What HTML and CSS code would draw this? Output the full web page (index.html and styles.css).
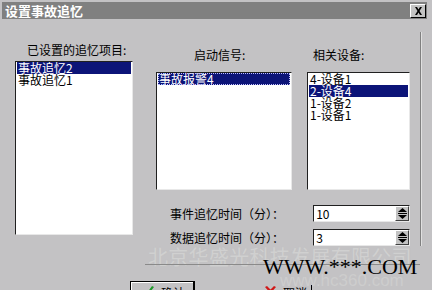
FILE: index.html
```html
<!DOCTYPE html>
<html>
<head>
<meta charset="utf-8">
<link rel="stylesheet" href="styles.css">
</head>
<body>
<div class="window">
  <div class="titlebar">
    <span class="title">设置事故追忆</span>
    <span class="close">
      <svg width="9" height="8" viewBox="0 0 9 8"><path d="M1 0h2l1.5 2.5L6 0h2L5.5 4 8 8H6L4.5 5.5 3 8H1l2.5-4z" fill="#000"/></svg>
    </span>
  </div>
  <div class="content">
    <div class="col-left">
      <div class="label">已设置的追忆项目:</div>
      <div class="listbox list-left">
        <div class="item sel">事故追忆2</div>
        <div class="item">事故追忆1</div>
      </div>
    </div>
    <div class="right-area">
      <div class="top-row">
        <div class="col-mid">
          <div class="label">启动信号:</div>
          <div class="listbox list-mid">
            <div class="item sel dotted">事故报警4</div>
          </div>
        </div>
        <div class="col-right">
          <div class="label label-r">相关设备:</div>
          <div class="listbox list-right">
            <div class="item">4-设备1</div>
            <div class="item sel">2-设备4</div>
            <div class="item">1-设备2</div>
            <div class="item">1-设备1</div>
          </div>
        </div>
      </div>
      <div class="spin-row">
        <span class="spin-label">事件追忆时间（分）：</span>
        <div class="spin">
          <span class="spin-val">10</span>
          <span class="spin-btn"><svg width="9" height="11" viewBox="0 0 9 11"><path d="M4.5 0L9 4H0z M0 7h9L4.5 11z" fill="#000"/><rect x="0" y="5" width="9" height="1" fill="#000"/></svg></span>
        </div>
      </div>
      <div class="spin-row">
        <span class="spin-label">数据追忆时间（分）：</span>
        <div class="spin">
          <span class="spin-val">3</span>
          <span class="spin-btn"><svg width="9" height="11" viewBox="0 0 9 11"><path d="M4.5 0L9 4H0z M0 7h9L4.5 11z" fill="#000"/><rect x="0" y="5" width="9" height="1" fill="#000"/></svg></span>
        </div>
      </div>
    </div>
    <div class="vline"></div>
  </div>
  <div class="footer">
    <div class="btn ok">
      <svg width="11" height="10" viewBox="0 0 11 10"><path d="M0 6l2-2 2 3 5-7 2 1-7 9z" fill="#1f9a2a"/></svg>
      <span>确认</span>
    </div>
    <div class="btn cancel">
      <svg width="11" height="10" viewBox="0 0 11 10"><path d="M0 1l2-1 3.5 3.5L9 0l2 1-3.5 4L11 9l-2 1-3.5-3.5L2 10 0 9l3.5-4z" fill="#d01818"/></svg>
      <span>取消</span>
    </div>
  </div>
  <div class="watermark">
    <div class="wm-cn">北京华盛光科技发展有限公司</div>
    <div class="wm-line"></div>
    <div class="wm-www">WWW.***.COM</div>
    <div class="wm-hc">www.hc360.com</div>
  </div>
</div>
</body>
</html>
```

FILE: styles.css
```css
html, body {
  margin: 0;
  padding: 0;
  background: #c3c3c3;
}
.window {
  position: relative;
  width: 432px;
  height: 290px;
  overflow: hidden;
  background: #c3c2c4;
  font-family: "Noto Sans CJK SC", "DejaVu Sans", sans-serif;
  font-size: 12px;
  color: #000;
}
.titlebar {
  margin: 2px 5px 0 2px;
  height: 17px;
  background: #808080;
  display: flex;
  align-items: center;
  justify-content: space-between;
  padding: 0 1px 0 3px;
}
.title {
  color: #fff;
  font-weight: bold;
  font-size: 13px;
  line-height: 17px;
}
.close {
  width: 14px;
  height: 12px;
  background: #c3c3c3;
  border-top: 1px solid #fff;
  border-left: 1px solid #fff;
  border-right: 1px solid #000;
  border-bottom: 1px solid #000;
  display: flex;
  align-items: center;
  justify-content: center;
}
.content {
  display: flex;
  padding-left: 15px;
}
.label {
  height: 14px;
  line-height: 14px;
  white-space: nowrap;
}
.col-left {
  width: 118px;
  padding-top: 24px;
}
.col-left .label {
  margin-bottom: 4px;
  padding-left: 12px;
}
.listbox {
  background: #fff;
  border-top: 1px solid #202020;
  border-left: 1px solid #202020;
  border-right: 1px solid #e8e8e8;
  border-bottom: 1px solid #e8e8e8;
  box-sizing: border-box;
  padding: 0 1px;
}
.list-left {
  height: 174px;
}
.right-area {
  margin-left: 23px;
  padding-top: 29px;
  width: 254px;
}
.top-row {
  display: flex;
  gap: 15px;
}
.col-mid {
  width: 136px;
}
.col-mid .label {
  padding-left: 38px;
  margin-bottom: 10px;
}
.col-right {
  width: 103px;
}
.label-r {
  padding-left: 6px;
  margin-bottom: 10px;
}
.list-mid, .list-right {
  height: 118px;
}
.item {
  height: 12px;
  line-height: 12px;
  white-space: nowrap;
  padding-left: 1px;
}
.sel {
  background: #0c1478;
  color: #fff;
}
.dotted {
  outline: 1px dotted #c0c0ff;
  outline-offset: -1px;
}
.spin-row {
  display: flex;
  align-items: center;
  height: 17px;
  margin-top: 7px;
}
.top-row + .spin-row {
  margin-top: 15px;
}
.spin-label {
  width: 151px;
  padding-left: 14px;
  white-space: nowrap;
}
.spin {
  width: 102px;
  height: 17px;
  box-sizing: border-box;
  background: #fff;
  border-top: 1px solid #202020;
  border-left: 1px solid #202020;
  border-right: 1px solid #e8e8e8;
  border-bottom: 1px solid #e8e8e8;
  display: flex;
  align-items: center;
  justify-content: space-between;
}
.spin-val {
  padding-left: 2px;
  line-height: 14px;
}
.spin-btn {
  width: 14px;
  height: 15px;
  box-sizing: border-box;
  background: #c3c3c3;
  border-top: 1px solid #fff;
  border-left: 1px solid #fff;
  border-right: 1px solid #404040;
  border-bottom: 1px solid #404040;
  display: flex;
  align-items: center;
  justify-content: center;
}
.vline {
  width: 1px;
  margin-left: 10px;
  margin-top: 13px;
  background: #808080;
  border-right: 1px solid #e0e0e0;
}
.footer {
  display: flex;
  margin-top: 35px;
  padding-left: 130px;
  gap: 60px;
}
.btn {
  height: 24px;
  box-sizing: border-box;
  display: flex;
  align-items: flex-start;
  padding-top: 4px;
  gap: 7px;
}
.btn span {
  line-height: 14px;
}
.ok {
  width: 65px;
  border-top: 1px solid #000;
  border-left: 1px solid #000;
  border-right: 2px solid #000;
  box-shadow: inset 1px 1px 0 #fff;
  padding-left: 12px;
}
.cancel {
  width: 57px;
  padding-left: 10px;
  border-right: 1px solid #000;
  height: 20px;
  margin-top: 4px;
  padding-top: 1px;
}
.watermark {
  position: absolute;
  left: 145px;
  top: 243px;
  width: 287px;
  height: 47px;
  pointer-events: none;
}
.wm-cn {
  position: absolute;
  left: 3px;
  top: 4px;
  font-size: 20px;
  line-height: 20px;
  color: #d0d0d0;
  text-shadow: 0 0 1px #c0c0c0;
  white-space: nowrap;
  letter-spacing: 0.3px;
}
.wm-line {
  position: absolute;
  left: 0;
  top: 21px;
  width: 275px;
  height: 1px;
  background: #8a8a8a;
}
.wm-www {
  position: absolute;
  left: 118px;
  top: 12px;
  font-family: "Liberation Serif", serif;
  font-size: 22px;
  line-height: 24px;
  color: #000;
  white-space: nowrap;
}
.wm-hc {
  position: absolute;
  left: 135px;
  top: 29px;
  font-family: "Liberation Sans", sans-serif;
  font-size: 17px;
  line-height: 18px;
  color: #cdcdcd;
  white-space: nowrap;
}
```
